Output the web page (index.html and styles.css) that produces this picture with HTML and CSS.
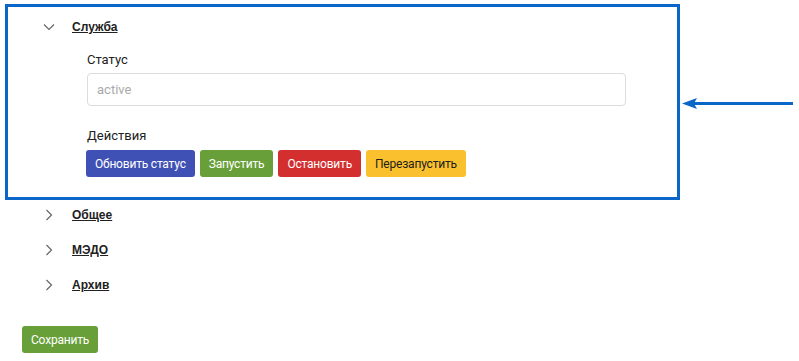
FILE: index.html
```html
<!DOCTYPE html>
<html lang="ru">
<head>
    <meta charset="UTF-8">
    <title>Настройки</title>
    <link rel="stylesheet" href="styles.css">
</head>
<body>

    <div class="highlight">
        <div class="row">
            <svg class="chevron" width="12" height="12" viewBox="0 0 12 12">
                <path d="M1 3.5 L6 8.5 L11 3.5" fill="none" stroke="#666" stroke-width="1.2"/>
            </svg>
            <a class="title" href="#">Служба</a>
        </div>
        <div class="panel">
            <div class="label">Статус</div>
            <input class="field" type="text" value="active" readonly>
            <div class="label actions-label">Действия</div>
            <div class="buttons">
                <button class="btn blue">Обновить статус</button>
                <button class="btn green">Запустить</button>
                <button class="btn red">Остановить</button>
                <button class="btn yellow">Перезапустить</button>
            </div>
        </div>
    </div>

    <svg class="arrow" width="116" height="14" viewBox="0 0 116 14">
        <path d="M12 6.5 H111" stroke="#0a66c8" stroke-width="3"/>
        <path d="M0 6.5 L15 1 L12 6.5 L15 12 Z" fill="#0a66c8"/>
    </svg>

    <div class="sections">
        <div class="row">
            <svg class="chevron" width="12" height="12" viewBox="0 0 12 12">
                <path d="M3.5 1 L8.5 6 L3.5 11" fill="none" stroke="#666" stroke-width="1.2"/>
            </svg>
            <a class="title" href="#">Общее</a>
        </div>
        <div class="row">
            <svg class="chevron" width="12" height="12" viewBox="0 0 12 12">
                <path d="M3.5 1 L8.5 6 L3.5 11" fill="none" stroke="#666" stroke-width="1.2"/>
            </svg>
            <a class="title" href="#">МЭДО</a>
        </div>
        <div class="row">
            <svg class="chevron" width="12" height="12" viewBox="0 0 12 12">
                <path d="M3.5 1 L8.5 6 L3.5 11" fill="none" stroke="#666" stroke-width="1.2"/>
            </svg>
            <a class="title" href="#">Архив</a>
        </div>
    </div>

    <button class="btn green save">Сохранить</button>

</body>
</html>
```

FILE: styles.css
```css
body {
    font-family: Roboto, "Liberation Sans", Arial, sans-serif;
    font-size: 13px;
    color: #212121;
    background-color: #ffffff;
    margin: 0;
    position: relative;
}
.highlight {
    margin: 4px 0 0 5px;
    width: 669px;
    border: 3px solid #0a66c8;
    padding: 10px 0 20px 0;
}
.row {
    display: flex;
    align-items: center;
    height: 20px;
    padding-left: 35px;
}
.chevron {
    width: 12px;
    height: 12px;
    margin-right: 17px;
}
.title {
    color: #212121;
    font-family: "Liberation Sans", Arial, sans-serif;
    font-weight: bold;
    text-decoration: underline;
    font-size: 12px;
}
.panel {
    padding-left: 79px;
    padding-top: 15px;
}
.label {
    height: 16px;
    line-height: 16px;
    margin-bottom: 5px;
}
.field {
    display: block;
    box-sizing: border-box;
    width: 539px;
    height: 33px;
    border: 1px solid #dcdcdc;
    border-radius: 4px;
    padding: 0 9px;
    font-family: inherit;
    font-size: 13px;
    color: #aaaaaa;
    outline: none;
}
.actions-label {
    margin-top: 22px;
    margin-bottom: 6px;
}
.buttons {
    display: flex;
    gap: 5px;
    margin-left: -1px;
}
.btn {
    height: 27px;
    border: none;
    border-radius: 3px;
    padding: 0 9px;
    font-family: Roboto, "Liberation Sans", Arial, sans-serif;
    font-size: 12px;
    letter-spacing: -0.2px;
    color: #ffffff;
    cursor: pointer;
}
.blue { background-color: #3f51b5; }
.green { background-color: #689f38; }
.red { background-color: #d32f2f; }
.yellow { background-color: #fbc02d; color: #212121; }
.sections {
    display: flex;
    flex-direction: column;
    gap: 15px;
    padding-top: 5px;
    padding-left: 8px;
}
.save {
    margin: 31px 0 0 22px;
}
.arrow {
    position: absolute;
    left: 682px;
    top: 97px;
}
```
